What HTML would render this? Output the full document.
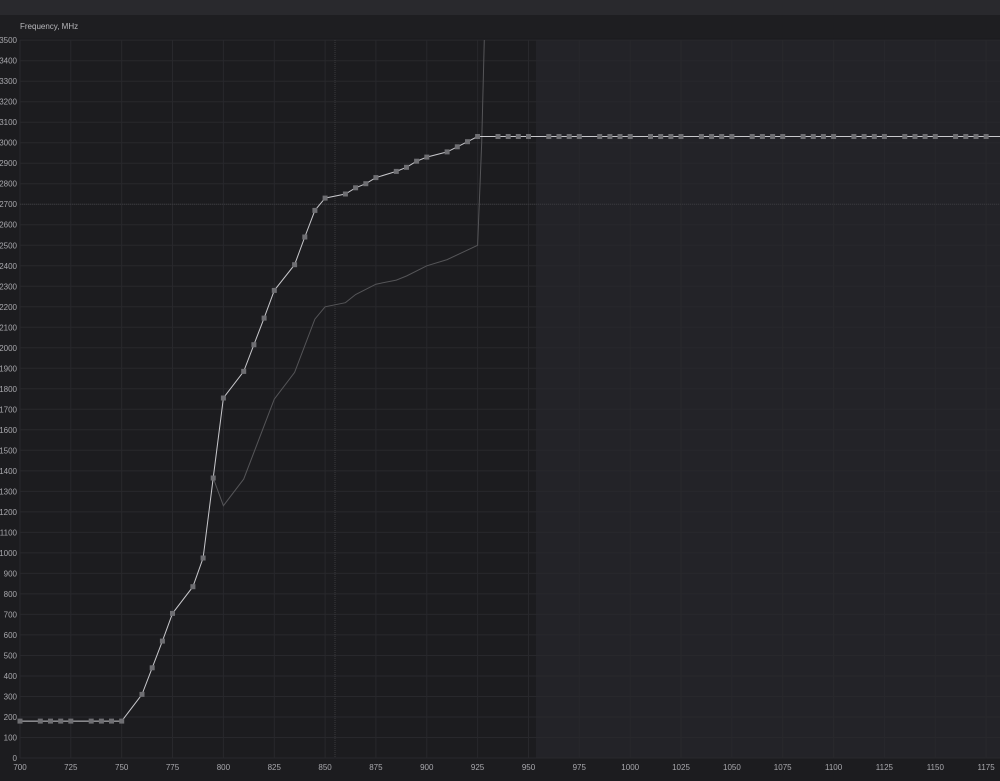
<!DOCTYPE html>
<html><head><meta charset="utf-8"><style>
html,body{margin:0;padding:0;background:#1c1c1f;width:1000px;height:781px;overflow:hidden;font-family:"Liberation Sans",sans-serif}
#top{position:absolute;left:0;top:0;width:1000px;height:15px;background:#29292d}
#hdr{position:absolute;left:0;top:15px;width:1000px;height:23px;background:#1e1e21;color:#b8b8bc;font-size:8px;line-height:23px;padding-left:20px;box-sizing:border-box}
svg{position:absolute;left:0;top:0}
</style></head><body>
<div id="top"></div>
<div id="hdr">Frequency, MHz</div>
<svg id="s" width="1000" height="781" xmlns="http://www.w3.org/2000/svg"></svg>
<script>
const s=document.getElementById('s');
const X=f=>20+(f-700)*2.034, Y=v=>758-v*0.2051;
let h='<defs><clipPath id="c"><rect x="0" y="40" width="1000" height="720"/></clipPath></defs>';
h+=`<rect x="536" y="40" width="464" height="718" fill="#232328"/>`;
for(let v=0;v<=3500;v+=100){const y=Y(v).toFixed(1);h+=`<line x1="20" x2="1000" y1="${y}" y2="${y}" stroke="#28282c" stroke-width="1"/>`;
h+=`<text x="17" y="${+y+3}" fill="#a8a8ad" font-size="8" text-anchor="end" font-family="Liberation Sans">${v}</text>`;}
for(let f=700;f<=1175;f+=25){const x=X(f).toFixed(1);h+=`<line x1="${x}" x2="${x}" y1="40" y2="758" stroke="#28282c"/>`;
h+=`<text x="${x}" y="770" fill="#a8a8ad" font-size="8" text-anchor="middle" font-family="Liberation Sans">${f}</text>`;}
h+=`<line x1="20" x2="1000" y1="${Y(2700)}" y2="${Y(2700)}" stroke="#3a3a3e" stroke-dasharray="1,1"/>`;
h+=`<line x1="335" x2="335" y1="40" y2="758" stroke="#3a3a3e" stroke-dasharray="1,1"/>`;
const g=[[795,1365],[800,1230],[810,1360],[825,1750],[835,1880],[845,2140],[850,2200],[860,2220],[865,2260],[875,2310],[885,2330],[890,2350],[900,2400],[910,2430],[925,2500],[927,3000],[928.5,3600]];
h+=`<polyline clip-path="url(#c)" fill="none" stroke="#555558" stroke-width="1" points="${g.map(p=>X(p[0]).toFixed(1)+','+Y(p[1]).toFixed(1)).join(' ')}"/>`;
const w=[[700,180],[710,180],[715,180],[720,180],[725,180],[735,180],[740,180],[745,180],[750,180],[760,310],[765,440],[770,570],[775,705],[785,835],[790,975],[795,1365],[800,1755],[810,1885],[815,2015],[820,2145],[825,2280],[835,2405],[840,2540],[845,2670],[850,2730],[860,2750],[865,2780],[870,2800],[875,2830],[885,2860],[890,2880],[895,2910],[900,2930],[910,2955],[915,2980],[920,3005],[925,3030]];
for(let b=925;b<1175;b+=25){[10,15,20,25].forEach(d=>{if(b+d<=1175)w.push([b+d,3030])});}
h+=`<polyline fill="none" stroke="#c8c8cc" stroke-width="1" points="${w.map(p=>X(p[0]).toFixed(1)+','+Y(p[1]).toFixed(1)).join(' ')} 1000,${Y(3030).toFixed(1)}"/>`;
w.forEach(p=>{h+=`<rect x="${(X(p[0])-2.5).toFixed(1)}" y="${(Y(p[1])-2.5).toFixed(1)}" width="5" height="5" fill="#6e6e72"/>`});
s.innerHTML=h;
</script>
</body></html>
